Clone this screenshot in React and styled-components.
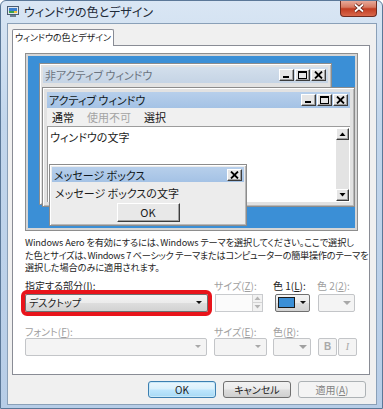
import React from "react";
import styled, { createGlobalStyle } from "styled-components";

const GlobalStyle = createGlobalStyle`
  html, body {
    margin: 0;
    padding: 0;
    background: #ffffff;
  }
  body {
    font-family: "Noto Sans CJK JP", "Liberation Sans", sans-serif;
    font-feature-settings: "palt";
    color: #1b1b1b;
  }
`;

const Dialog = styled.div`
  width: 383px;
  height: 409px;
  box-sizing: border-box;
  border: 1px solid #5b7898;
  border-radius: 6px 6px 0 0;
  background: linear-gradient(180deg, #d9e6f4 0%, #c2d6ec 30%, #b7cde7 100%);
  display: flex;
  flex-direction: column;
  overflow: hidden;
`;

const TitleBar = styled.div`
  height: 22px;
  flex: none;
  display: flex;
  align-items: flex-start;
  padding-left: 6px;
`;

const TitleIcon = styled.svg`
  flex: none;
  margin-top: 5px;
`;

const TitleText = styled.div`
  margin: 3px 0 0 5px;
  font-size: 12px;
  line-height: 16px;
  color: #1e2a38;
  white-space: nowrap;
`;

const CloseButton = styled.div`
  margin: -1px 5px 0 auto;
  width: 37px;
  height: 17px;
  box-sizing: border-box;
  border: 1px solid #6e2b20;
  border-top: none;
  border-radius: 0 0 4px 4px;
  background: linear-gradient(180deg, #eab0a2 0%, #d87a62 45%, #c23d22 55%, #d8684c 100%);
  display: flex;
  align-items: center;
  justify-content: center;
`;

const Client = styled.div`
  flex: 1;
  margin: 0 5px 3px 6px;
  border: 1px solid #8aa0b8;
  background: #f0f0f0;
  padding: 5px 6px 0 4px;
  display: flex;
  flex-direction: column;
`;

const TabStrip = styled.div`
  display: flex;
`;

const Tab = styled.div`
  position: relative;
  z-index: 1;
  width: 102px;
  height: 17px;
  box-sizing: border-box;
  margin-bottom: -1px;
  border: 1px solid #898c95;
  border-bottom: none;
  border-radius: 2px 2px 0 0;
  background: #ffffff;
  font-size: 9px;
  letter-spacing: -0.1px;
  line-height: 16px;
  text-align: center;
  white-space: nowrap;
`;

const Panel = styled.div`
  height: 330px;
  box-sizing: border-box;
  border: 1px solid #898c95;
  background: #ffffff;
  padding: 7px 11px 0 12px;
`;

const Preview = styled.div`
  position: relative;
  height: 178px;
  box-sizing: border-box;
  border: 1px solid #8e8e8e;
  background: #3b8fd6;
  box-shadow: inset 0 0 0 2px #d6d6d6;
`;

const Win = styled.div`
  position: absolute;
  left: ${(p) => p.$x}px;
  top: ${(p) => p.$y}px;
  width: ${(p) => p.$w}px;
  height: ${(p) => p.$h}px;
  box-sizing: border-box;
  border: 1px solid #8c8c8c;
  padding: ${(p) => p.$pad}px;
  background: ${(p) => (p.$msg ? "#ececec" : "#e2e2e2")};
  box-shadow: inset 1px 1px 0 #ffffff, inset -1px -1px 0 #b8b8b8;
  display: flex;
  flex-direction: column;
`;

const Caption = styled.div`
  flex: none;
  height: ${(p) => p.$h}px;
  display: flex;
  align-items: center;
  padding: 0 2px 0 2px;
  background: ${(p) =>
    p.$active
      ? "linear-gradient(180deg, #b7cfeb 0%, #a4c2e5 100%)"
      : "linear-gradient(180deg, #d3dfec 0%, #c5d4e5 100%)"};
  color: ${(p) => (p.$active ? "#101820" : "#6b7480")};
  font-size: 11px;
  white-space: nowrap;
`;

const CaptionButtons = styled.div`
  margin-left: auto;
  display: flex;
  gap: 1px;
`;

const CapBtn = styled.div`
  width: 15px;
  height: 12px;
  box-sizing: border-box;
  border: 1px solid;
  border-color: #ffffff #3c3c3c #3c3c3c #ffffff;
  background: #e6e6e6;
  box-shadow: inset -1px -1px 0 #a0a0a0;
  display: flex;
  align-items: center;
  justify-content: center;
`;

const MenuBar = styled.div`
  flex: none;
  height: 18px;
  display: flex;
  align-items: center;
  gap: 13px;
  padding-left: 5px;
  font-size: 11px;
  background: #f0f0f0;
`;

const MenuItem = styled.span`
  color: ${(p) => (p.$disabled ? "#a4a4a4" : "#151515")};
`;

const TextArea = styled.div`
  flex: 1;
  display: flex;
  background: #ffffff;
  border-top: 1px solid #9c9c9c;
  border-left: 1px solid #9c9c9c;
`;

const WinText = styled.div`
  flex: 1;
  padding: 3px 0 0 2px;
  font-size: 11px;
  line-height: 15px;
`;

const ScrollBar = styled.div`
  width: 13px;
  margin: 1px 1px 1px 0;
  display: flex;
  flex-direction: column;
  justify-content: space-between;
  background: #e3e3e3;
`;

const ScrollBtn = styled(CapBtn)`
  width: 13px;
  height: 12px;
`;

const MsgText = styled.div`
  padding: 4px 0 0 3px;
  font-size: 11px;
  line-height: 14px;
`;

const MsgOk = styled.div`
  align-self: center;
  margin-top: 3px;
  width: 63px;
  height: 19px;
  box-sizing: border-box;
  border: 1px solid;
  border-color: #ffffff #3c3c3c #3c3c3c #ffffff;
  box-shadow: inset -1px -1px 0 #a0a0a0;
  background: #e8e8e8;
  font-size: 11px;
  line-height: 17px;
  text-align: center;
`;

const Desc = styled.div`
  margin-top: 5px;
  font-size: 9.2px;
  line-height: 12.5px;
  white-space: nowrap;
  color: #1e1e1e;
`;

const DescLine = styled.div`
  letter-spacing: ${(p) => p.$ls}px;
`;

const Controls = styled.div`
  margin-top: 5px;
  display: grid;
  grid-template-columns: 183px 53px 38px 40px;
  grid-template-rows: 13px 20px 26px 18px;
  column-gap: 6px;
`;

const Label = styled.div`
  align-self: end;
  font-size: 10px;
  line-height: 13px;
  white-space: nowrap;
  color: ${(p) => (p.$disabled ? "#a0a0a0" : "#1e1e1e")};
  u {
    text-decoration-thickness: 1px;
    text-underline-offset: 1px;
  }
`;

const Combo = styled.div`
  align-self: end;
  width: ${(p) => p.$w}px;
  height: 18px;
  margin-left: ${(p) => p.$ml || 0}px;
  box-sizing: border-box;
  display: flex;
  align-items: center;
  padding: 0 5px 0 3px;
  font-size: 10px;
  border: 1px solid ${(p) => (p.$disabled ? "#c3c5c8" : "#707070")};
  border-radius: 2px;
  background: ${(p) =>
    p.$disabled
      ? "#f4f4f4"
      : "linear-gradient(180deg, #f4f4f4 0%, #ebebeb 48%, #dddddd 52%, #d2d2d2 100%)"};
  outline: ${(p) => (p.$marked ? "4px solid #e8141b" : "none")};
`;

const ComboText = styled.span`
  flex: 1;
  white-space: nowrap;
`;

const Arrow = styled.span`
  width: 0;
  height: 0;
  border-left: ${(p) => p.$s}px solid transparent;
  border-right: ${(p) => p.$s}px solid transparent;
  border-top: ${(p) => p.$s}px solid ${(p) => p.$c};
`;

const Spin = styled.div`
  align-self: end;
  margin-left: 1px;
  width: 48px;
  height: 18px;
  box-sizing: border-box;
  border: 1px solid #c9cbce;
  background: #fbfbfb;
  display: flex;
  justify-content: flex-end;
`;

const SpinBtns = styled.div`
  width: 9px;
  display: flex;
  flex-direction: column;
  border-left: 1px solid #d4d4d4;
`;

const SpinBtn = styled.div`
  flex: 1;
  display: flex;
  align-items: center;
  justify-content: center;
  background: #f2f2f2;
  & + & {
    border-top: 1px solid #d4d4d4;
  }
`;

const ColorBtn = styled.div`
  align-self: end;
  margin-left: ${(p) => p.$ml}px;
  width: ${(p) => p.$w}px;
  height: 18px;
  box-sizing: border-box;
  border: 1px solid ${(p) => (p.$disabled ? "#c3c5c8" : "#707070")};
  border-radius: 2px;
  background: ${(p) =>
    p.$disabled
      ? "#f4f4f4"
      : "linear-gradient(180deg, #f4f4f4 0%, #ebebeb 48%, #dddddd 52%, #d2d2d2 100%)"};
  display: flex;
  align-items: center;
  padding: 0 3px 0 2px;
  gap: 5px;
  justify-content: ${(p) => (p.$disabled ? "flex-end" : "flex-start")};
`;

const Swatch = styled.span`
  width: 17px;
  height: 11px;
  box-sizing: border-box;
  border: 1px solid #1a1a1a;
  background: ${(p) => p.$color};
`;

const StyleBtns = styled.div`
  align-self: end;
  margin-left: 1px;
  display: flex;
  gap: 1px;
`;

const StyleBtn = styled.div`
  width: 19px;
  height: 18px;
  box-sizing: border-box;
  border: 1px solid #c3c5c8;
  border-radius: 2px;
  background: #f4f4f4;
  color: #a8a8a8;
  font-size: 10px;
  line-height: 16px;
  text-align: center;
  font-weight: ${(p) => (p.$italic ? 400 : 700)};
  font-style: ${(p) => (p.$italic ? "italic" : "normal")};
  font-family: ${(p) => (p.$italic ? '"Liberation Serif", serif' : '"Liberation Sans", sans-serif')};
`;

const ButtonRow = styled.div`
  margin-top: 6px;
  display: flex;
  justify-content: flex-end;
  gap: 7px;
  padding-right: 4px;
`;

const DlgButton = styled.div`
  width: 68px;
  height: 17px;
  box-sizing: border-box;
  border: 1px solid ${(p) => (p.$focus ? "#3c7fb1" : p.$disabled ? "#adb2b5" : "#707070")};
  border-radius: 3px;
  background: ${(p) =>
    p.$disabled
      ? "#f4f4f4"
      : p.$focus
      ? "linear-gradient(180deg, #eaf6fd 0%, #d9f0fc 48%, #bee6fd 52%, #a7d9f5 100%)"
      : "linear-gradient(180deg, #f2f2f2 0%, #ebebeb 48%, #dddddd 52%, #cfcfcf 100%)"};
  box-shadow: ${(p) => (p.$focus ? "inset 0 0 0 1px #c8e8f8" : "none")};
  color: ${(p) => (p.$disabled ? "#838383" : "#1b1b1b")};
  font-size: 10px;
  line-height: 15px;
  text-align: center;
  white-space: nowrap;
`;

const MinGlyph = () => (
  <svg width="11" height="8" viewBox="0 0 11 8">
    <rect x="2" y="5" width="6" height="2" fill="#000" />
  </svg>
);

const MaxGlyph = () => (
  <svg width="11" height="8" viewBox="0 0 11 8">
    <rect x="1.5" y="0.5" width="8" height="7" fill="none" stroke="#000" />
    <rect x="1" y="0" width="9" height="2" fill="#000" />
  </svg>
);

const CloseGlyph = () => (
  <svg width="11" height="8" viewBox="0 0 11 8">
    <path d="M2 0.5 L9 7.5 M9 0.5 L2 7.5" stroke="#000" strokeWidth="1.8" />
  </svg>
);

const CaptionControls = ({ closeOnly }) => (
  <CaptionButtons>
    {!closeOnly && (
      <CapBtn>
        <MinGlyph />
      </CapBtn>
    )}
    {!closeOnly && (
      <CapBtn>
        <MaxGlyph />
      </CapBtn>
    )}
    <CapBtn>
      <CloseGlyph />
    </CapBtn>
  </CaptionButtons>
);

const ArrowGlyph = ({ up, color = "#000" }) => (
  <svg width="7" height="4" viewBox="0 0 7 4">
    <path d={up ? "M0.5 4 L3.5 0.5 L6.5 4 Z" : "M0.5 0 L3.5 3.5 L6.5 0 Z"} fill={color} />
  </svg>
);

const App = () => {
  return (
    <>
      <GlobalStyle />
      <Dialog>
        <TitleBar>
          <TitleIcon width="12" height="12" viewBox="0 0 12 12">
            <rect x="0.5" y="0.5" width="11" height="8" fill="#dfe6ee" stroke="#4b5e74" />
            <rect x="2" y="2" width="8" height="3" fill="#3a7fd0" />
            <rect x="2" y="5" width="5" height="2" fill="#3aa14a" />
            <rect x="7" y="5" width="3" height="2" fill="#f0c040" />
            <rect x="3" y="9" width="6" height="2" fill="#6d7e92" />
          </TitleIcon>
          <TitleText>ウィンドウの色とデザイン</TitleText>
          <CloseButton>
            <svg width="12" height="10" viewBox="0 0 12 10">
              <path d="M2 1.5 L10 8.5 M10 1.5 L2 8.5" stroke="#5a1a10" strokeWidth="3.4" />
              <path d="M2 1.5 L10 8.5 M10 1.5 L2 8.5" stroke="#ffffff" strokeWidth="1.8" />
            </svg>
          </CloseButton>
        </TitleBar>

        <Client>
          <TabStrip>
            <Tab>ウィンドウの色とデザイン</Tab>
          </TabStrip>
          <Panel>
            <Preview>
              <Win $x={13} $y={9} $w={293} $h={142} $pad={3}>
                <Caption $h={16}>
                  非アクティブ ウィンドウ
                  <CaptionControls />
                </Caption>
              </Win>

              <Win $x={16} $y={33} $w={313} $h={120} $pad={4}>
                <Caption $h={16} $active>
                  アクティブ ウィンドウ
                  <CaptionControls />
                </Caption>
                <MenuBar>
                  <MenuItem>通常</MenuItem>
                  <MenuItem $disabled>使用不可</MenuItem>
                  <MenuItem>選択</MenuItem>
                </MenuBar>
                <TextArea>
                  <WinText>ウィンドウの文字</WinText>
                  <ScrollBar>
                    <ScrollBtn>
                      <ArrowGlyph up />
                    </ScrollBtn>
                    <ScrollBtn>
                      <ArrowGlyph />
                    </ScrollBtn>
                  </ScrollBar>
                </TextArea>
              </Win>

              <Win $x={23} $y={110} $w={198} $h={62} $pad={2} $msg>
                <Caption $h={15} $active>
                  メッセージ ボックス
                  <CaptionControls closeOnly />
                </Caption>
                <MsgText>メッセージ ボックスの文字</MsgText>
                <MsgOk>OK</MsgOk>
              </Win>
            </Preview>

            <Desc>
              <DescLine $ls={-0.12}>
                Windows Aero を有効にするには、Windows テーマを選択してください。ここで選択し
              </DescLine>
              <DescLine $ls={-0.3}>
                た色とサイズは、Windows 7 ベーシック テーマまたはコンピューターの簡単操作のテーマを
              </DescLine>
              <DescLine $ls={-0.1}>選択した場合のみに適用されます。</DescLine>
            </Desc>

            <Controls>
              <Label>
                指定する部分(<u>I</u>):
              </Label>
              <Label $disabled>
                サイズ(<u>Z</u>):
              </Label>
              <Label>
                色 1(<u>L</u>):
              </Label>
              <Label $disabled>
                色 2(<u>2</u>):
              </Label>

              <Combo $w={183} $marked>
                <ComboText>デスクトップ</ComboText>
                <Arrow $s={3} $c="#111" />
              </Combo>
              <Spin>
                <SpinBtns>
                  <SpinBtn>
                    <ArrowGlyph up color="#b4b4b4" />
                  </SpinBtn>
                  <SpinBtn>
                    <ArrowGlyph color="#b4b4b4" />
                  </SpinBtn>
                </SpinBtns>
              </Spin>
              <ColorBtn $w={35} $ml={2}>
                <Swatch $color="#3b8fd6" />
                <Arrow $s={3} $c="#111" />
              </ColorBtn>
              <ColorBtn $w={37} $ml={1} $disabled>
                <Arrow $s={4} $c="#a8a8a8" />
              </ColorBtn>

              <Label $disabled>
                フォント(<u>F</u>):
              </Label>
              <Label $disabled>
                サイズ(<u>E</u>):
              </Label>
              <Label $disabled>
                色(<u>R</u>):
              </Label>
              <div />

              <Combo $w={182} $disabled>
                <ComboText />
                <Arrow $s={3} $c="#a8a8a8" />
              </Combo>
              <Combo $w={53} $disabled>
                <ComboText />
                <Arrow $s={3} $c="#a8a8a8" />
              </Combo>
              <ColorBtn $w={38} $ml={0} $disabled>
                <Arrow $s={4} $c="#a0a0a0" />
              </ColorBtn>
              <StyleBtns>
                <StyleBtn>B</StyleBtn>
                <StyleBtn $italic>I</StyleBtn>
              </StyleBtns>
            </Controls>
          </Panel>

          <ButtonRow>
            <DlgButton $focus>OK</DlgButton>
            <DlgButton>キャンセル</DlgButton>
            <DlgButton $disabled>
              適用(<u>A</u>)
            </DlgButton>
          </ButtonRow>
        </Client>
      </Dialog>
    </>
  );
};

export default App;
